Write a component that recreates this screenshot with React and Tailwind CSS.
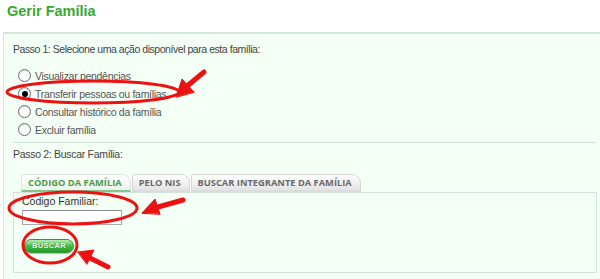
import React from "react";

function Radio({ checked }) {
  return (
    <span className="w-[13px] h-[13px] rounded-full border border-[#6b6b6b] bg-white flex items-center justify-center shrink-0 shadow-[inset_0_1px_2px_rgba(0,0,0,0.15)]">
      {checked && <span className="w-[6px] h-[6px] rounded-full bg-black" />}
    </span>
  );
}

function Tab({ label, active }) {
  return (
    <div
      className={
        "h-[18px] pl-[6px] pr-[8px] flex items-center text-[9.3px] font-bold rounded-tl-[3px] rounded-tr-[9px] border-t border-r border-l " +
        (active
          ? "text-[#4e9a4e] bg-gradient-to-b from-white to-[#eaf5ea] border-[#dfe6df] border-b-[2px] border-b-[#86c48c]"
          : "text-[#6a6a6a] bg-gradient-to-b from-white to-[#e4e4e4] border-[#d6d6d6] border-b-[2px] border-b-[#dcdcdc]")
      }
      style={{ fontFamily: "'Open Sans', 'Liberation Sans', sans-serif" }}
    >
      {label}
    </div>
  );
}

export default function App() {
  const options = [
    "Visualizar pendências",
    "Transferir pessoas ou famílias",
    "Consultar histórico da família",
    "Excluir família",
  ];
  return (
    <div
      className="w-[600px] h-[279px] bg-white overflow-hidden relative"
      style={{ fontFamily: "'Liberation Sans', Arial, sans-serif" }}
    >
      <div className="h-[32px] pl-[7px] pt-[2px] text-[14.5px] font-bold text-[#35a834] leading-[18px]">
        Gerir Família
      </div>
      <div className="ml-[3px] border-t-[2px] border-l border-[#d3e8da] bg-[#f4fff6] h-[260px] pl-[9px] pr-[3px]">
        <div className="pt-[9px] text-[10.5px] tracking-[-0.45px] text-[#444] leading-[12px]">
          Passo 1: Selecione uma ação disponível para esta família:
        </div>
        <div className="mt-[14px] flex flex-col gap-[5px] pl-[5px]">
          {options.map((o, i) => (
            <div key={o} className="flex items-center gap-[4px] h-[13px]">
              <Radio checked={i === 1} />
              <span className="text-[10.5px] tracking-[-0.3px] text-[#555] leading-[12px]">{o}</span>
            </div>
          ))}
        </div>
        <div className="mt-[6px] border-t border-[#cfe6d6]" />
        <div className="pt-[5px] text-[10.5px] tracking-[-0.3px] text-[#444] leading-[12px]">
          Passo 2: Buscar Família:
        </div>
        <div className="mt-[14px] flex items-end pl-[8px] gap-[1px]">
          <Tab label="CÓDIGO DA FAMÍLIA" active />
          <Tab label="PELO NIS" />
          <Tab label="BUSCAR INTEGRANTE DA FAMÍLIA" />
        </div>
        <div className="border border-[#d0e6d8] h-[81px] pl-[8px] pt-[2px]">
          <div className="text-[10.5px] text-[#333] leading-[13px]">Codigo Familiar:</div>
          <div className="mt-[2px] w-[100px] h-[15px] bg-white border border-[#a9a9a9] border-t-[#8e8e8e]" />
          <div className="mt-[14px] ml-[2px] w-[50px] h-[14px] rounded-[7px] bg-gradient-to-b from-[#b5efb5] via-[#45bd45] to-[#239a2a] border border-[#2f9a34] flex items-center justify-center shadow-[0_1px_1px_rgba(0,0,0,0.25)]">
            <span className="text-[7.5px] font-bold text-white tracking-[0.3px] leading-none [text-shadow:0_0_1px_rgba(0,80,0,0.9)]">
              BUSCAR
            </span>
          </div>
        </div>
      </div>

      <svg className="absolute inset-0 pointer-events-none" width="600" height="279" viewBox="0 0 600 279">
        <g fill="none" stroke="#ee1111" strokeWidth="3">
          <ellipse cx="93" cy="92" rx="86" ry="11" />
          <ellipse cx="73" cy="208" rx="64" ry="16" />
          <ellipse cx="50" cy="245" rx="27" ry="18" />
        </g>
        <g fill="#ee1111" stroke="#ee1111" strokeLinecap="round">
          <line x1="204" y1="72" x2="186" y2="87" strokeWidth="5" />
          <polygon points="176,97 182,79 194,92" strokeWidth="1" />
          <line x1="183" y1="200" x2="158" y2="207" strokeWidth="5" />
          <polygon points="142,213 155,199 160,214" strokeWidth="1" />
          <line x1="108" y1="267" x2="90" y2="258" strokeWidth="5" />
          <polygon points="78,252 94,250 87,264" strokeWidth="1" />
        </g>
      </svg>
    </div>
  );
}
